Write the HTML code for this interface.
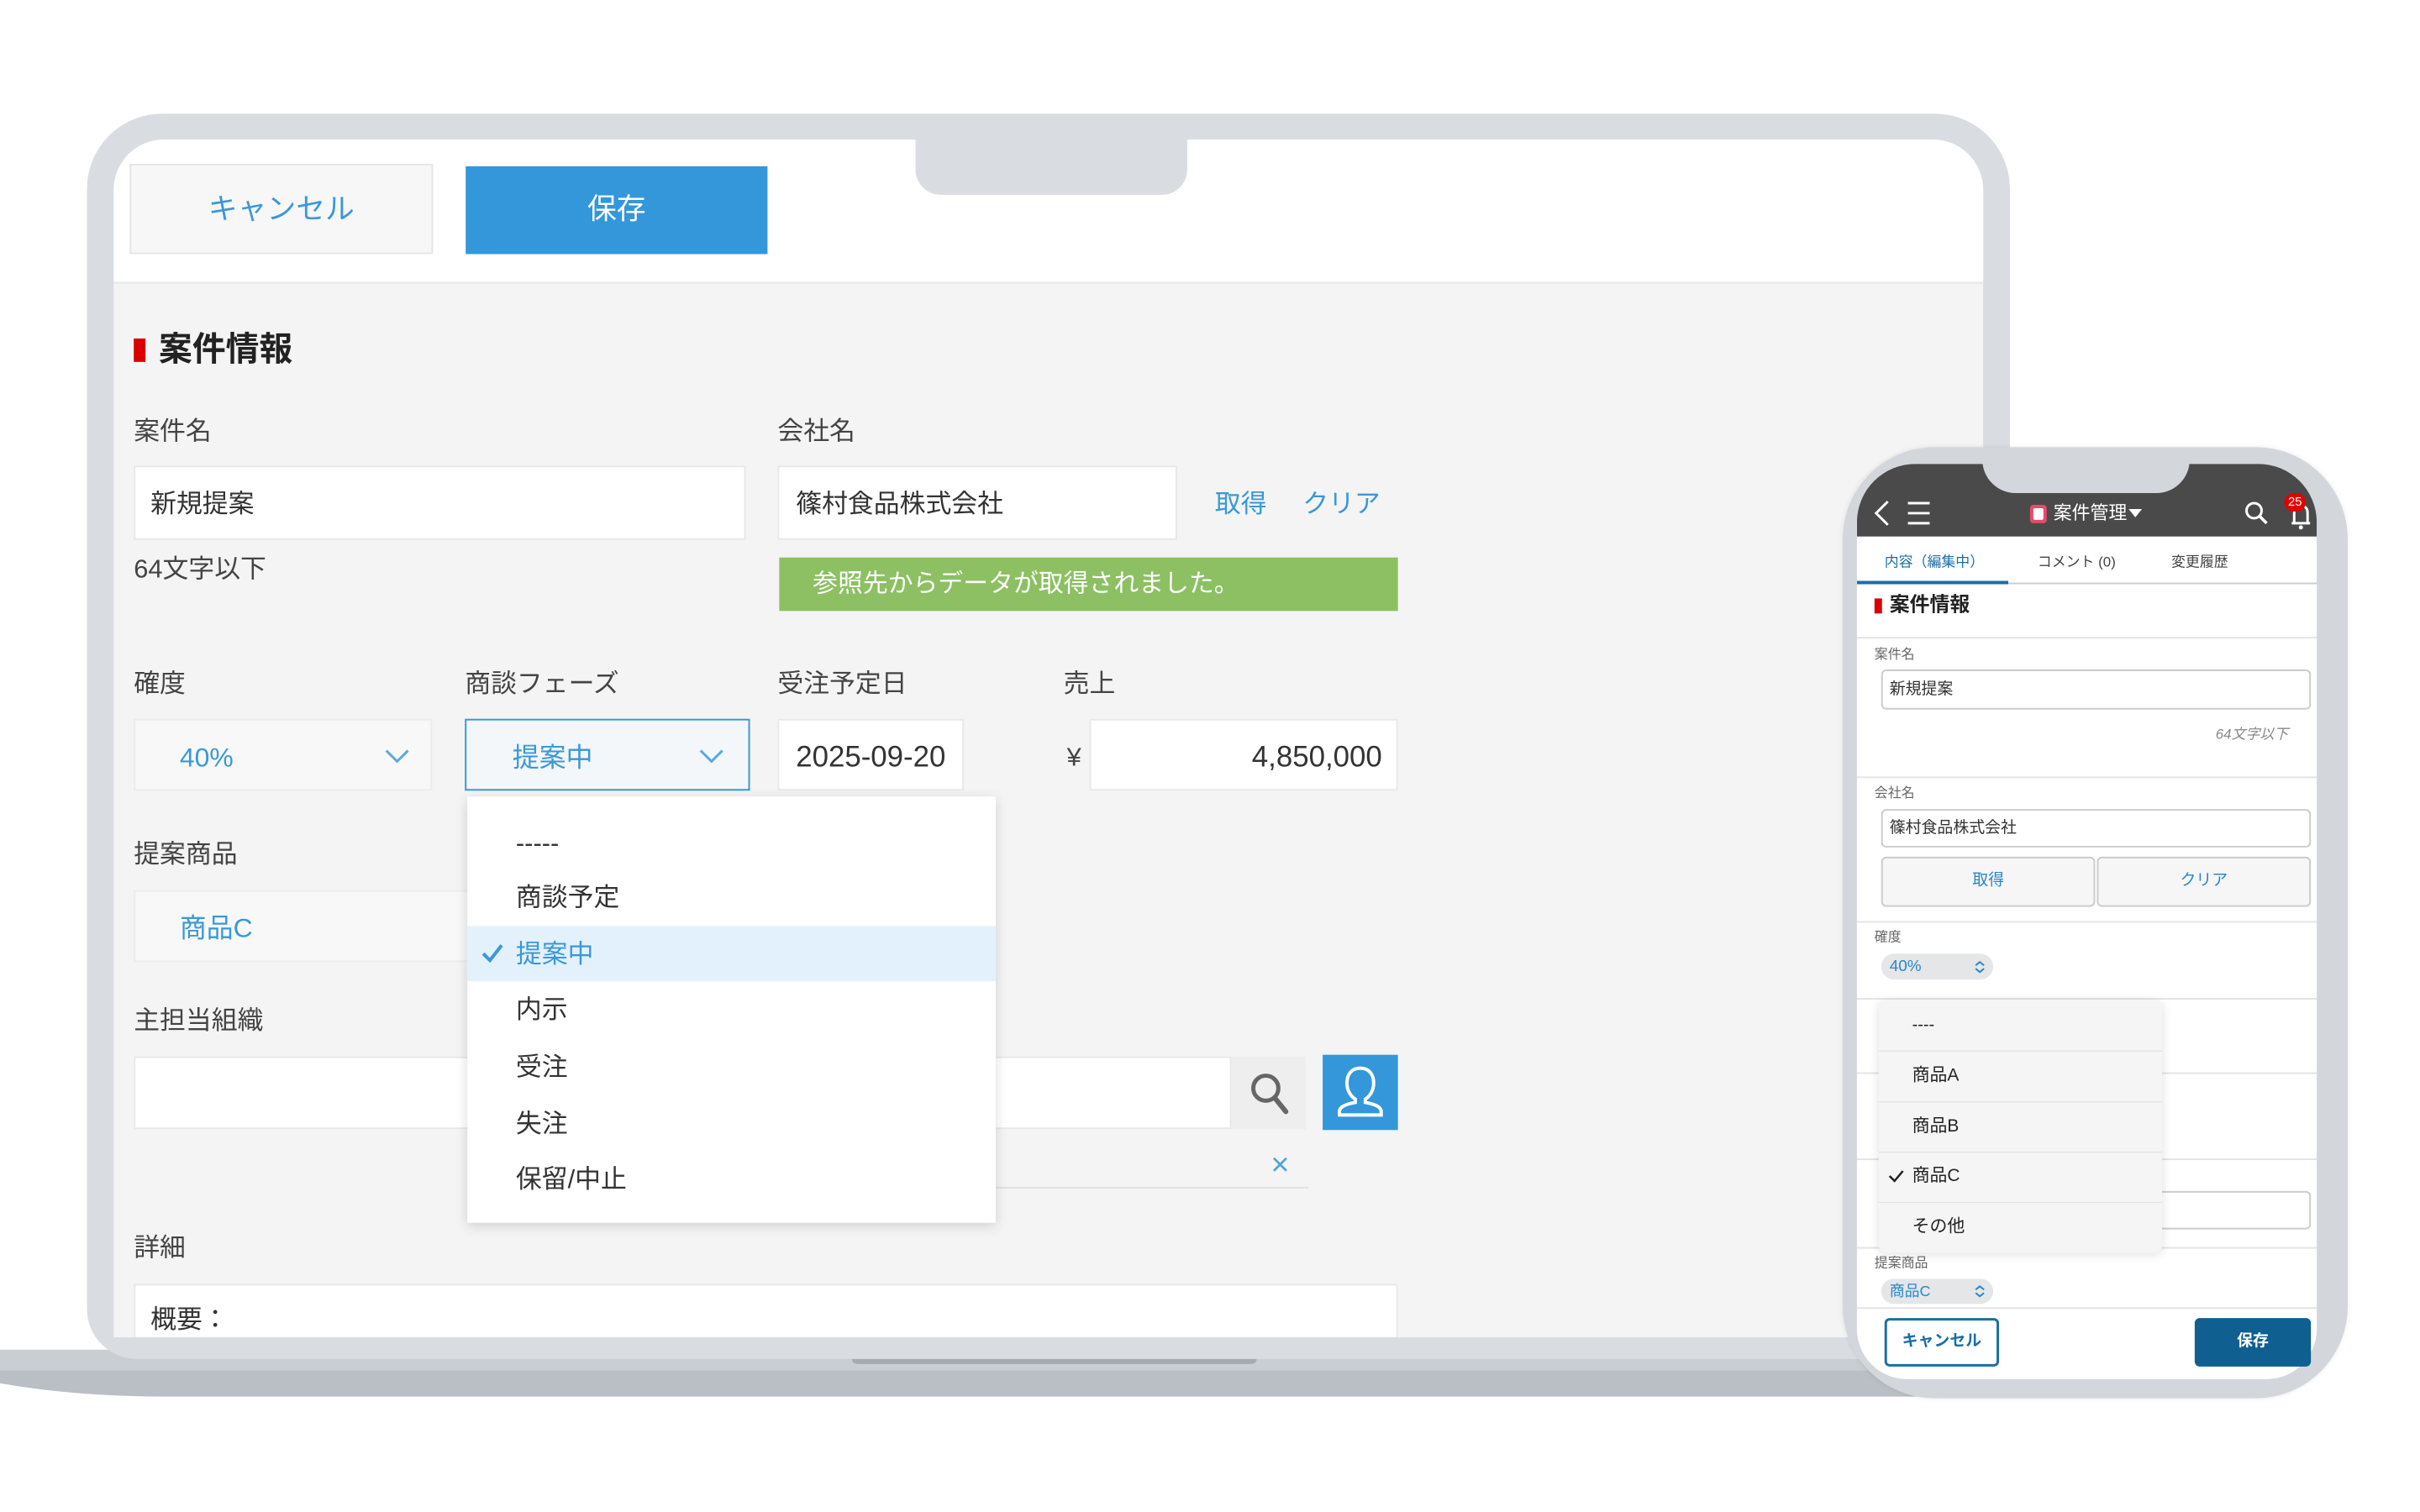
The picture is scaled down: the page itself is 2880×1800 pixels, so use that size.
<!DOCTYPE html>
<html><head><meta charset="utf-8"><style>
*{margin:0;padding:0;box-sizing:border-box}
body{width:2880px;height:1800px;background:#fff;position:relative;overflow:hidden;font-family:"Liberation Sans","Noto Sans CJK JP",sans-serif;color:#333}
#w{position:absolute;left:0;top:0;width:2880px;height:1800px;transform:scale(0.995);transform-origin:0 0}
.a{position:absolute}
.lbl{position:absolute;font-size:31px;color:#444;line-height:1}
.inp{position:absolute;background:#fff;border:2px solid #e8e8e8}
.t{position:absolute;line-height:1;white-space:nowrap}
.pl{position:absolute;font-size:16px;color:#666;line-height:1}
.sep{position:absolute;left:2221px;width:550px;height:2px;background:#e4e4e4}
</style></head><body><div id="w">

<svg class="a" style="left:0;top:1600px" width="2300" height="90">
<path d="M0 15 L2300 15 L2300 71 L200 71 Q90 71 0 55 Z" fill="#b9bfc5"/>
<path d="M0 15 L2300 15 L2300 40 L0 40 Z" fill="#c9ced3"/>
<path d="M1019 17 L1503 17 L1503 26 Q1503 32 1495 32 L1027 32 Q1019 32 1019 26 Z" fill="#a5abb1"/>
</svg>

<div class="a" style="left:104px;top:136px;width:2300px;height:1490px;background:#d9dde1;border-radius:90px 90px 60px 60px"></div>
<div class="a" style="left:136px;top:167px;width:2236px;height:1433px;background:#f4f4f4;border-radius:60px 60px 0 0;overflow:hidden">
  <div class="a" style="left:0;top:0;width:2240px;height:173px;background:#fff;border-bottom:3px solid #ebebeb"></div>
  <div class="a" style="left:24px;top:1369px;width:1512px;height:100px;background:#fff;border:2px solid #e8e8e8"></div>
  <div class="t" style="left:44px;top:1396px;font-size:31px;color:#333">概要：</div>
</div>
<div class="a" style="left:1095px;top:160px;width:325px;height:73px;background:#d9dde1;border-radius:0 0 30px 30px"></div>

<div class="a" style="left:155px;top:196px;width:363px;height:108px;background:#f7f7f7;border:2px solid #e6e6e6"></div>
<div class="t" style="left:155px;top:233px;width:363px;text-align:center;font-size:35px;color:#3a98d8">キャンセル</div>
<div class="a" style="left:557px;top:199px;width:361px;height:105px;background:#3397da"></div>
<div class="t" style="left:557px;top:233px;width:361px;text-align:center;font-size:35px;color:#fff">保存</div>

<div class="a" style="left:160px;top:405px;width:14px;height:28px;background:#d80000"></div>
<div class="t" style="left:190px;top:398px;font-size:40px;font-weight:bold;color:#222">案件情報</div>

<div class="lbl" style="left:160px;top:500px">案件名</div>
<div class="inp" style="left:160px;top:557px;width:732px;height:89px"></div>
<div class="t" style="left:180px;top:587px;font-size:31px;color:#333">新規提案</div>
<div class="lbl" style="left:160px;top:665px">64文字以下</div>

<div class="lbl" style="left:930px;top:500px">会社名</div>
<div class="inp" style="left:930px;top:557px;width:478px;height:89px"></div>
<div class="t" style="left:952px;top:587px;font-size:31px;color:#333">篠村食品株式会社</div>
<div class="t" style="left:1453px;top:587px;font-size:31px;color:#3a98d8">取得</div>
<div class="t" style="left:1558px;top:587px;font-size:31px;color:#3a98d8">クリア</div>
<div class="a" style="left:932px;top:667px;width:740px;height:64px;background:#8cc063"></div>
<div class="t" style="left:972px;top:684px;font-size:30px;color:#fff">参照先からデータが取得されました。</div>

<div class="lbl" style="left:160px;top:802px">確度</div>
<div class="lbl" style="left:556px;top:802px">商談フェーズ</div>
<div class="lbl" style="left:930px;top:802px">受注予定日</div>
<div class="lbl" style="left:1272px;top:802px">売上</div>

<div class="a" style="left:160px;top:860px;width:357px;height:86px;background:#f8f8f8;border:2px solid #ececec"></div>
<div class="t" style="left:215px;top:890px;font-size:32px;color:#3a98d8">40%</div>
<svg class="a" style="left:460px;top:895px" width="30" height="20"><path d="M2 3 L15 16 L28 3" stroke="#5aa8de" stroke-width="3" fill="none"/></svg>

<div class="a" style="left:556px;top:860px;width:341px;height:86px;background:#f3f7fa;border:2px solid #3a98d8"></div>
<div class="t" style="left:613px;top:890px;font-size:32px;color:#3a98d8">提案中</div>
<svg class="a" style="left:836px;top:895px" width="30" height="20"><path d="M2 3 L15 16 L28 3" stroke="#5aa8de" stroke-width="3" fill="none"/></svg>

<div class="inp" style="left:930px;top:860px;width:223px;height:86px"></div>
<div class="t" style="left:952px;top:888px;font-size:35px;color:#333">2025-09-20</div>
<div class="t" style="left:1276px;top:890px;font-size:31px;color:#444">¥</div>
<div class="inp" style="left:1303px;top:860px;width:369px;height:86px"></div>
<div class="t" style="left:1303px;top:888px;width:350px;text-align:right;font-size:35px;color:#333">4,850,000</div>

<div class="lbl" style="left:160px;top:1006px">提案商品</div>
<div class="a" style="left:160px;top:1065px;width:420px;height:86px;background:#f8f8f8;border:2px solid #ececec"></div>
<div class="t" style="left:215px;top:1094px;font-size:32px;color:#3a98d8">商品C</div>

<div class="lbl" style="left:160px;top:1205px">主担当組織</div>
<div class="inp" style="left:160px;top:1264px;width:1313px;height:87px"></div>
<div class="a" style="left:1473px;top:1264px;width:89px;height:87px;background:#eeeeee"></div>
<svg class="a" style="left:1492px;top:1280px" width="52" height="56"><circle cx="22" cy="22" r="15" stroke="#666" stroke-width="5" fill="none"/><path d="M33 34 L46 50" stroke="#666" stroke-width="6" stroke-linecap="round"/></svg>
<div class="a" style="left:1582px;top:1262px;width:90px;height:90px;background:#3397da"></div>
<svg class="a" style="left:1594px;top:1272px" width="66" height="70"><path d="M33 6 C22 6 17 14 17 24 C17 33 22 40 27 43 L27 47 C16 49 8 52 8 58 L8 62 L58 62 L58 58 C58 52 50 49 39 47 L39 43 C44 40 49 33 49 24 C49 14 44 6 33 6 Z" stroke="#fff" stroke-width="4" fill="none"/></svg>
<div class="t" style="left:1520px;top:1375px;font-size:38px;color:#4fa3dc">×</div>
<div class="a" style="left:1191px;top:1420px;width:374px;height:2px;background:#e2e2e2"></div>

<div class="lbl" style="left:160px;top:1477px">詳細</div>

<div class="a" style="left:559px;top:953px;width:632px;height:510px;background:#fff;box-shadow:0 4px 14px rgba(0,0,0,.15)"></div>
<div class="a" style="left:559px;top:1108px;width:632px;height:66px;background:#e3f1fc"></div>
<div class="t" style="left:617px;top:993px;font-size:31px;color:#333">-----</div>
<div class="t" style="left:617px;top:1058px;font-size:31px;color:#333">商談予定</div>
<svg class="a" style="left:575px;top:1128px" width="28" height="26"><path d="M3 13 L11 21 L25 3" stroke="#3a98d8" stroke-width="4" fill="none"/></svg>
<div class="t" style="left:617px;top:1126px;font-size:31px;color:#3a98d8">提案中</div>
<div class="t" style="left:617px;top:1192px;font-size:31px;color:#333">内示</div>
<div class="t" style="left:617px;top:1261px;font-size:31px;color:#333">受注</div>
<div class="t" style="left:617px;top:1329px;font-size:31px;color:#333">失注</div>
<div class="t" style="left:617px;top:1395px;font-size:31px;color:#333">保留/中止</div>

<div class="a" style="left:0;top:0;width:2880px;height:1800px">
<div class="a" style="left:2204px;top:535px;width:604px;height:1138px;background:#d3d7db;border-radius:110px;box-shadow:0 0 6px rgba(0,0,0,.08)"></div>
<div class="a" style="left:2221px;top:555px;width:550px;height:1095px;background:#f4f4f4;border-radius:70px 70px 60px 60px;overflow:hidden">
  <div class="a" style="left:0;top:0;width:550px;height:87px;background:#4a4a4a"></div>
  <div class="a" style="left:0;top:87px;width:550px;height:57px;background:#fff;border-bottom:2px solid #ccc"></div>
  <div class="a" style="left:0;top:140px;width:181px;height:4px;background:#1b6fa3"></div>
  <div class="a" style="left:0;top:144px;width:550px;height:1000px;background:#fff"></div>
</div>
<div class="a" style="left:2371px;top:548px;width:248px;height:42px;background:#d3d7db;border-radius:0 0 40px 40px"></div>
<svg class="a" style="left:2238px;top:596px" width="90" height="36"><path d="M20 4 L6 18 L20 32" stroke="#fff" stroke-width="3" fill="none"/><path d="M44 6 H70 M44 18 H70 M44 30 H70" stroke="#fff" stroke-width="3"/></svg>
<div class="a" style="left:2428px;top:604px;width:20px;height:22px;background:#e84b6b;border-radius:4px"></div>
<div class="a" style="left:2432px;top:608px;width:12px;height:14px;background:#fff;border-radius:2px"></div>
<div class="t" style="left:2456px;top:603px;font-size:22px;color:#fff">案件管理</div>
<svg class="a" style="left:2546px;top:609px" width="16" height="12"><path d="M0 0 H16 L8 10 Z" fill="#fff"/></svg>
<svg class="a" style="left:2683px;top:598px" width="32" height="32"><circle cx="13" cy="13" r="9" stroke="#fff" stroke-width="3" fill="none"/><path d="M20 20 L28 28" stroke="#fff" stroke-width="3.5"/></svg>
<svg class="a" style="left:2737px;top:600px" width="30" height="34"><path d="M7 26 V14 C7 8 10 5 15 5 C20 5 23 8 23 14 V26 H4 H26" stroke="#fff" stroke-width="3" fill="none"/><circle cx="15" cy="31" r="2.5" fill="#fff"/></svg>
<div class="a" style="left:2732px;top:590px;width:26px;height:22px;background:#e00000;border-radius:11px"></div>
<div class="t" style="left:2732px;top:593px;width:26px;text-align:center;font-size:15px;color:#fff">25</div>
<div class="t" style="left:2254px;top:664px;font-size:17px;color:#1b6fa3">内容（編集中）</div>
<div class="t" style="left:2437px;top:664px;font-size:17px;color:#444">コメント (0)</div>
<div class="t" style="left:2597px;top:664px;font-size:17px;color:#444">変更履歴</div>
<div class="a" style="left:2242px;top:716px;width:9px;height:18px;background:#d80000"></div>
<div class="t" style="left:2260px;top:712px;font-size:24px;font-weight:bold;color:#222">案件情報</div>
<div class="sep" style="top:762px"></div>
<div class="pl" style="left:2242px;top:776px">案件名</div>
<div class="a" style="left:2250px;top:801px;width:514px;height:48px;background:#fff;border:2px solid #ccc;border-radius:6px"></div>
<div class="t" style="left:2260px;top:815px;font-size:19px;color:#333">新規提案</div>
<div class="t" style="left:2650px;top:870px;font-size:17px;color:#888;font-style:italic">64文字以下</div>
<div class="sep" style="top:929px"></div>
<div class="pl" style="left:2242px;top:942px">会社名</div>
<div class="a" style="left:2250px;top:968px;width:514px;height:46px;background:#fff;border:2px solid #ccc;border-radius:6px"></div>
<div class="t" style="left:2260px;top:981px;font-size:19px;color:#333">篠村食品株式会社</div>
<div class="a" style="left:2250px;top:1025px;width:256px;height:60px;background:#f6f6f6;border:2px solid #ccc;border-radius:6px"></div>
<div class="a" style="left:2508px;top:1025px;width:256px;height:60px;background:#f6f6f6;border:2px solid #ccc;border-radius:6px"></div>
<div class="t" style="left:2250px;top:1044px;width:256px;text-align:center;font-size:19px;color:#2a86c8">取得</div>
<div class="t" style="left:2508px;top:1044px;width:256px;text-align:center;font-size:19px;color:#2a86c8">クリア</div>
<div class="sep" style="top:1102px"></div>
<div class="pl" style="left:2242px;top:1114px">確度</div>
<div class="a" style="left:2250px;top:1141px;width:134px;height:31px;background:#e4e6e8;border-radius:16px"></div>
<div class="t" style="left:2260px;top:1147px;font-size:19px;color:#2a86c8">40%</div>
<svg class="a" style="left:2361px;top:1149px" width="14" height="16"><path d="M2 6 L7 2 L12 6 M2 10 L7 14 L12 10" stroke="#2a86c8" stroke-width="2" fill="none"/></svg>
<div class="sep" style="top:1194px"></div>
<div class="sep" style="top:1283px"></div>
<div class="sep" style="top:1386px"></div>
<div class="a" style="left:2250px;top:1425px;width:514px;height:46px;background:#fff;border:2px solid #ccc;border-radius:6px"></div>
<div class="sep" style="top:1492px"></div>
<div class="pl" style="left:2242px;top:1504px">提案商品</div>
<div class="a" style="left:2250px;top:1530px;width:134px;height:30px;background:#e4e6e8;border-radius:16px"></div>
<div class="t" style="left:2260px;top:1536px;font-size:18px;color:#2a86c8">商品C</div>
<svg class="a" style="left:2361px;top:1537px" width="14" height="16"><path d="M2 6 L7 2 L12 6 M2 10 L7 14 L12 10" stroke="#2a86c8" stroke-width="2" fill="none"/></svg>
<div class="sep" style="top:1564px"></div>
<div class="a" style="left:2247px;top:1196px;width:339px;height:303px;background:#f5f5f5;border-radius:10px;box-shadow:0 2px 12px rgba(0,0,0,.12)"></div>
<div class="a" style="left:2247px;top:1257px;width:339px;height:1px;background:#ddd"></div>
<div class="a" style="left:2247px;top:1318px;width:339px;height:1px;background:#ddd"></div>
<div class="a" style="left:2247px;top:1378px;width:339px;height:1px;background:#ddd"></div>
<div class="a" style="left:2247px;top:1438px;width:339px;height:1px;background:#ddd"></div>
<div class="t" style="left:2287px;top:1216px;font-size:20px;color:#222">----</div>
<div class="t" style="left:2287px;top:1276px;font-size:21px;color:#222">商品A</div>
<div class="t" style="left:2287px;top:1337px;font-size:21px;color:#222">商品B</div>
<svg class="a" style="left:2258px;top:1398px" width="20" height="18"><path d="M2 9 L8 15 L18 3" stroke="#222" stroke-width="2.5" fill="none"/></svg>
<div class="t" style="left:2287px;top:1396px;font-size:21px;color:#222">商品C</div>
<div class="t" style="left:2287px;top:1457px;font-size:21px;color:#222">その他</div>
<div class="a" style="left:2254px;top:1577px;width:137px;height:58px;background:#fff;border:3px solid #1b6fa3;border-radius:6px"></div>
<div class="t" style="left:2254px;top:1595px;width:137px;text-align:center;font-size:19px;font-weight:bold;color:#1b6fa3">キャンセル</div>
<div class="a" style="left:2625px;top:1577px;width:139px;height:58px;background:#0f5f91;border-radius:6px"></div>
<div class="t" style="left:2625px;top:1595px;width:139px;text-align:center;font-size:19px;font-weight:bold;color:#fff">保存</div>
</div>
</div></body></html>
